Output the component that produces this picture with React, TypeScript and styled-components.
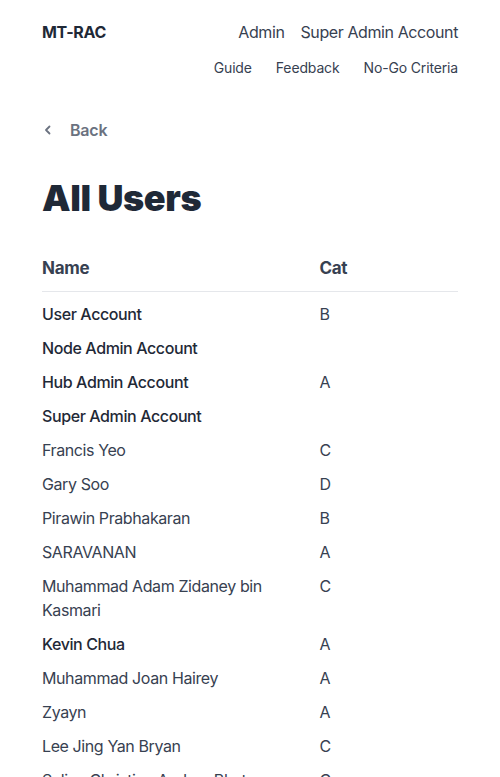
import React from "react";
import styled, { createGlobalStyle } from "styled-components";

const Global = createGlobalStyle`
  html, body { margin: 0; padding: 0; background: #fff; }
  body { font-family: Inter, "Noto Sans", sans-serif; color: #374151; -webkit-font-smoothing: antialiased; }
  * { box-sizing: border-box; }
`;

const Page = styled.div`
  padding: 20px 42px 0;
`;

const Header = styled.header`
  display: flex;
  justify-content: space-between;
  align-items: flex-start;
`;

const Brand = styled.div`
  font-size: 16px;
  line-height: 24px;
  font-weight: 700;
  color: #1f2937;
  letter-spacing: -0.3px;
`;

const NavCol = styled.div`
  display: flex;
  flex-direction: column;
  align-items: flex-end;
  gap: 14px;
`;

const NavRow = styled.nav<{ $small?: boolean }>`
  display: flex;
  gap: ${(p) => (p.$small ? "24px" : "16px")};
  font-size: ${(p) => (p.$small ? "14px" : "16px")};
  line-height: ${(p) => (p.$small ? "20px" : "24px")};
  letter-spacing: ${(p) => (p.$small ? "-0.15px" : "-0.4px")};
  color: #374151;
`;

const BackLink = styled.a`
  display: flex;
  align-items: center;
  gap: 17px;
  margin-top: 40px;
  font-size: 16px;
  line-height: 24px;
  font-weight: 600;
  color: #6b7280;
  text-decoration: none;
  padding-left: 1px;
  letter-spacing: -0.2px;
`;

const Title = styled.h1`
  margin: 36px 0 0;
  font-size: 36px;
  line-height: 40px;
  font-weight: 900;
  color: #1f2937;
  letter-spacing: -0.4px;
`;

const Table = styled.table`
  margin-top: 36px;
  width: 100%;
  border-collapse: collapse;
`;

const Th = styled.th`
  text-align: left;
  font-size: 17px;
  line-height: 28px;
  font-weight: 700;
  color: #374151;
  padding: 0 0 9px;
  letter-spacing: -0.3px;
  border-bottom: 1px solid #e5e7eb;
  &:first-child { width: 66.7%; padding-right: 16px; }
`;

const Tr = styled.tr`
  &:first-child td { padding-top: 10px; }
`;

const Td = styled.td<{ $strong?: boolean }>`
  vertical-align: top;
  font-size: 16px;
  line-height: 24px;
  padding: 5px 0;
  letter-spacing: -0.4px;
  font-weight: ${(p) => (p.$strong ? 500 : 400)};
  color: ${(p) => (p.$strong ? "#1f2937" : "#374151")};
  &:first-child { padding-right: 16px; }
`;

const users: { name: string; cat: string; strong?: boolean }[] = [
  { name: "User Account", cat: "B", strong: true },
  { name: "Node Admin Account", cat: "", strong: true },
  { name: "Hub Admin Account", cat: "A", strong: true },
  { name: "Super Admin Account", cat: "", strong: true },
  { name: "Francis Yeo", cat: "C" },
  { name: "Gary Soo", cat: "D" },
  { name: "Pirawin Prabhakaran", cat: "B" },
  { name: "SARAVANAN", cat: "A" },
  { name: "Muhammad Adam Zidaney bin Kasmari", cat: "C" },
  { name: "Kevin Chua", cat: "A", strong: true },
  { name: "Muhammad Joan Hairey", cat: "A" },
  { name: "Zyayn", cat: "A" },
  { name: "Lee Jing Yan Bryan", cat: "C" },
  { name: "Selina Christine Andrea Bhat", cat: "C" },
];

export default function App() {
  return (
    <>
      <Global />
      <Page>
        <Header>
          <Brand>MT-RAC</Brand>
          <NavCol>
            <NavRow>
              <span>Admin</span>
              <span>Super Admin Account</span>
            </NavRow>
            <NavRow $small>
              <span>Guide</span>
              <span>Feedback</span>
              <span>No-Go Criteria</span>
            </NavRow>
          </NavCol>
        </Header>
        <BackLink href="#">
          <svg width="10" height="10" viewBox="0 0 10 10" fill="none">
            <path d="M6.5 1.5 L3 5 L6.5 8.5" stroke="#6b7280" strokeWidth="1.8" strokeLinecap="round" strokeLinejoin="round" />
          </svg>
          Back
        </BackLink>
        <Title>All Users</Title>
        <Table>
          <thead>
            <tr>
              <Th>Name</Th>
              <Th>Cat</Th>
            </tr>
          </thead>
          <tbody>
            {users.map((u, i) => (
              <Tr key={i}>
                <Td $strong={u.strong}>{u.name}</Td>
                <Td>{u.cat}</Td>
              </Tr>
            ))}
          </tbody>
        </Table>
      </Page>
    </>
  );
}
